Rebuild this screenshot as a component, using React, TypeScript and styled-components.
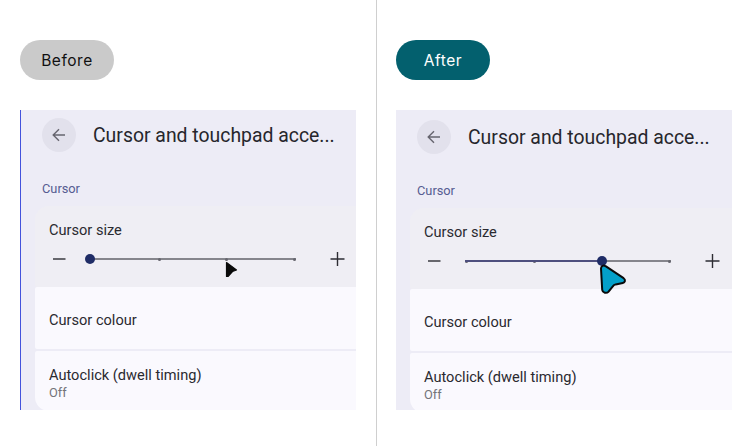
import { createGlobalStyle, styled } from "styled-components";

const GlobalStyle = createGlobalStyle`
  html, body { margin: 0; padding: 0; background: #fff; }
  body { width: 752px; height: 446px; overflow: hidden; font-family: "Inter", "Roboto", sans-serif; }
`;

const Page = styled.div`
  display: grid;
  grid-template-columns: 376px 1px 375px;
  width: 752px;
  height: 446px;
`;

const Divider = styled.div`
  background: #cfcfcf;
`;

const Column = styled.div<{ $after?: boolean }>`
  display: flex;
  flex-direction: column;
  align-items: flex-start;
  padding: 40px 20px 0 ${(p) => (p.$after ? 19 : 20)}px;
  gap: 30px;
  box-sizing: border-box;
`;

const Pill = styled.div<{ $after?: boolean }>`
  display: flex;
  align-items: center;
  justify-content: center;
  width: 94px;
  height: 40px;
  border-radius: 20px;
  background: ${(p) => (p.$after ? "#03606e" : "#cacaca")};
  color: ${(p) => (p.$after ? "#fff" : "#111")};
  font-family: "Inter", sans-serif;
  font-size: 15.5px;
  letter-spacing: 0.55px;
`;

const Phone = styled.div<{ $after?: boolean }>`
  position: relative;
  flex: none;
  width: 336px;
  height: 300px;
  box-sizing: border-box;
  overflow: hidden;
  background: #edecf6;
  padding: ${(p) => (p.$after ? "10px" : "8px")} 0 0 14px;
  border-left: ${(p) => (p.$after ? "0" : "1px solid #4352dc")};
`;

const Header = styled.div`
  display: flex;
  align-items: center;
  gap: 17px;
  height: 34px;
  margin-left: 7px;
`;

const BackButton = styled.div`
  display: flex;
  align-items: center;
  justify-content: center;
  width: 34px;
  height: 34px;
  border-radius: 50%;
  background: #e2e1ec;
`;

const Title = styled.div`
  font-family: "Roboto", sans-serif;
  font-size: 19.4px;
  color: #26262c;
  white-space: nowrap;
`;

const SectionLabel = styled.div`
  margin: 30px 0 10px 7px;
  height: 14px;
  line-height: 14px;
  font-family: "Roboto", sans-serif;
  font-size: 12.8px;
  color: #565c92;
`;

const SizeCard = styled.div`
  height: 81px;
  width: 340px;
  box-sizing: border-box;
  background: #efeef4;
  border-radius: 14px 14px 2px 2px;
  padding: 16px 14px 0;
`;

const RowLabel = styled.div`
  font-family: "Roboto", sans-serif;
  font-size: 14.6px;
  line-height: 16px;
  color: #2a2a30;
`;

const SliderRow = styled.div`
  display: flex;
  align-items: center;
  height: 20px;
  margin-top: 11px;
`;

const SliderIcon = styled.svg`
  flex: none;
  width: 20px;
  height: 20px;
`;

const Track = styled.div`
  position: relative;
  flex: none;
  display: flex;
  align-items: center;
  justify-content: space-between;
  width: 206px;
  height: 2px;
  margin: 0 31px 0 21px;
  background: #85858c;
`;

const TrackFill = styled.div`
  position: absolute;
  left: 0;
  top: 0;
  height: 2px;
  background: #4e4f7e;
`;

const Stop = styled.span`
  width: 3px;
  height: 3px;
  border-radius: 50%;
  background: #66666e;
`;

const Thumb = styled.span`
  position: absolute;
  top: -4px;
  width: 10px;
  height: 10px;
  border-radius: 50%;
  background: #1f2c66;
`;

const Card = styled.div<{ $last?: boolean }>`
  display: flex;
  flex-direction: column;
  justify-content: center;
  width: 340px;
  height: ${(p) => (p.$last ? 60 : 62)}px;
  box-sizing: border-box;
  margin-top: ${(p) => (p.$last ? 2 : 0)}px;
  padding: 3px 0 0 14px;
  background: #faf9fe;
  border-radius: ${(p) => (p.$last ? "2px 2px 14px 14px" : "2px")};
`;

const SubLabel = styled.div`
  margin-top: 3px;
  font-family: "Roboto", sans-serif;
  font-size: 12.8px;
  line-height: 13px;
  color: #74747a;
`;

const PointerOverlay = styled.svg<{ $after?: boolean }>`
  position: absolute;
  left: ${(p) => (p.$after ? 202 : 204)}px;
  top: ${(p) => (p.$after ? 153 : 151)}px;
  width: ${(p) => (p.$after ? 30 : 13)}px;
  height: ${(p) => (p.$after ? 32 : 17)}px;
`;

const ArrowBack = () => (
  <svg width="16" height="16" viewBox="0 0 16 16" fill="none" stroke="#66656f" strokeWidth="1.4">
    <path d="M14 8H2.4M8 2.2 2.2 8 8 13.8" />
  </svg>
);

const Minus = () => (
  <SliderIcon viewBox="0 0 20 20" stroke="#2d2d33" strokeWidth="1.4">
    <path d="M4 10h12.5" />
  </SliderIcon>
);

const Plus = () => (
  <SliderIcon viewBox="0 0 20 20" stroke="#2d2d33" strokeWidth="1.4">
    <path d="M3.5 10h14M10.5 3v14" />
  </SliderIcon>
);

const Screen = ({ after }: { after?: boolean }) => (
  <Phone $after={after}>
    <Header>
      <BackButton>
        <ArrowBack />
      </BackButton>
      <Title>Cursor and touchpad acce...</Title>
    </Header>
    <SectionLabel>Cursor</SectionLabel>
    <SizeCard>
      <RowLabel>Cursor size</RowLabel>
      <SliderRow>
        <Minus />
        <Track>
          {after && <TrackFill style={{ width: "66.5%" }} />}
          <Stop />
          <Stop />
          <Stop />
          <Stop />
          <Thumb style={{ left: after ? "calc(66.5% - 5px)" : "-5px" }} />
        </Track>
        <Plus />
      </SliderRow>
    </SizeCard>
    <Card>
      <RowLabel>Cursor colour</RowLabel>
    </Card>
    <Card $last>
      <div>
        <RowLabel>Autoclick (dwell timing)</RowLabel>
        <SubLabel>Off</SubLabel>
      </div>
    </Card>
    {after ? (
      <PointerOverlay $after viewBox="0 0 30 32">
        <path
          d="M3 5.5C3 2.8 5.6 1.8 7.6 3.2L25.6 15.2C27.8 16.8 27.2 19.4 24.8 19.9L17.6 21.4C16.4 21.7 15.6 22.3 14.8 23.4L10.6 28.6C8.6 30.8 4.6 30 4.2 26.8Z"
          fill="#04a0c9"
          stroke="#0a0a0a"
          strokeWidth="2"
          strokeLinejoin="round"
        />
      </PointerOverlay>
    ) : (
      <PointerOverlay viewBox="0 0 13 17">
        <path d="M1.5 1.5 11.5 9 7.5 10.5 3 15.5H1.5Z" fill="#0a0a0a" stroke="#0a0a0a" strokeWidth="1.2" strokeLinejoin="round" />
      </PointerOverlay>
    )}
  </Phone>
);

export default function App() {
  return (
    <>
      <GlobalStyle />
      <Page>
        <Column>
          <Pill>Before</Pill>
          <Screen />
        </Column>
        <Divider />
        <Column $after>
          <Pill $after>After</Pill>
          <Screen after />
        </Column>
      </Page>
    </>
  );
}
